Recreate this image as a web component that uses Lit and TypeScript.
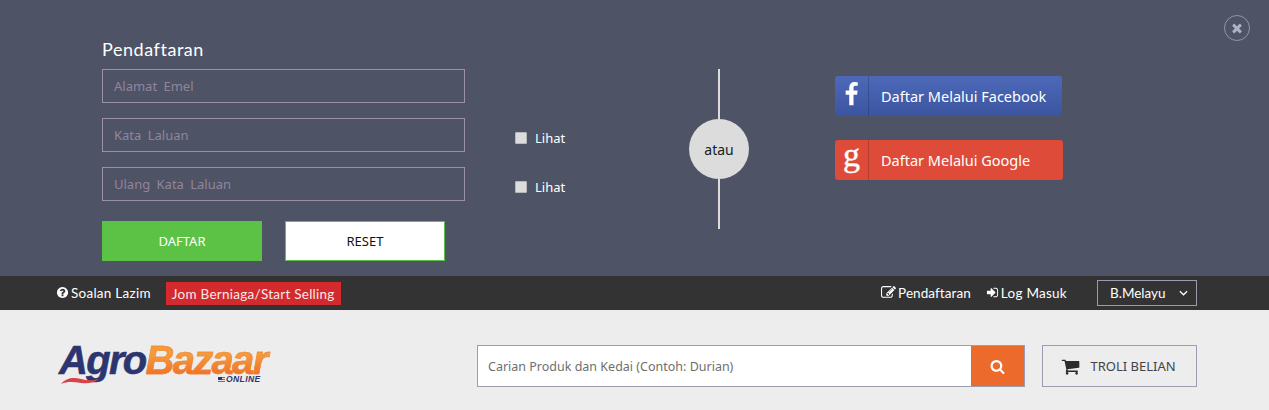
import { LitElement, html, css, svg } from "lit";
import { customElement } from "lit/decorators.js";

const fa = (d: string, cls: string) => html`<svg class=${cls} viewBox="0 0 1792 1792" aria-hidden="true">${svg`<path fill="currentColor" d=${d}></path>`}</svg>`;

const ICONS = {
  question: "M1024 1376v-192q0-14-9-23t-23-9h-192q-14 0-23 9t-9 23v192q0 14 9 23t23 9h192q14 0 23-9t9-23zm256-672q0-88-55.5-163t-138.5-116-170-41q-243 0-371 213-15 24 8 42l132 100q7 6 19 6 16 0 25-12 53-68 86-92 34-24 86-24 48 0 85.5 26t37.5 59q0 38-20 61t-68 45q-63 28-115.5 86.5t-52.5 125.5v36q0 14 9 23t23 9h192q14 0 23-9t9-23q0-19 21.5-49.5t54.5-49.5q32-18 49-28.5t46-35 44.5-48 28-60.5 12.5-81zm384 192q0 209-103 385.5t-279.5 279.5-385.5 103-385.5-103-279.5-279.5-103-385.5 103-385.5 279.5-279.5 385.5-103 385.5 103 279.5 279.5 103 385.5z",
  search: "M1216 832q0-185-131.5-316.5t-316.5-131.5-316.5 131.5-131.5 316.5 131.5 316.5 316.5 131.5 316.5-131.5 131.5-316.5zm512 832q0 52-38 90t-90 38q-54 0-90-38l-343-342q-179 124-399 124-143 0-273.5-55.5t-225-150-150-225-55.5-273.5 55.5-273.5 150-225 225-150 273.5-55.5 273.5 55.5 225 150 150 225 55.5 273.5q0 220-124 399l343 343q37 37 37 90z",
  cart: "M704 1536q0 52-38 90t-90 38-90-38-38-90 38-90 90-38 90 38 38 90zm896 0q0 52-38 90t-90 38-90-38-38-90 38-90 90-38 90 38 38 90zm128-1088v512q0 24-16.5 42.5t-40.5 21.5l-1044 122q13 60 13 70 0 16-24 64h920q26 0 45 19t19 45-19 45-45 19h-1024q-26 0-45-19t-19-45q0-11 8-31.5t16-36 21.5-40 15.5-29.5l-177-823h-204q-26 0-45-19t-19-45 19-45 45-19h256q16 0 28.5 6.5t19.5 15.5 13 24.5 8 26 5.5 29.5 4.5 26h1201q26 0 45 19t19 45z",
  signIn: "M1312 896q0 26-19 45l-544 544q-19 19-45 19t-45-19-19-45v-288h-448q-26 0-45-19t-19-45v-384q0-26 19-45t45-19h448v-288q0-26 19-45t45-19 45 19l544 544q19 19 19 45zm352-352v704q0 119-84.5 203.5t-203.5 84.5h-320q-13 0-22.5-9.5t-9.5-22.5q0-4-1-20t-.5-26.5 3-23.5 10-19.5 20.5-6.5h320q66 0 113-47t47-113v-704q0-66-47-113t-113-47h-312l-11.5-1-11.5-3-8-5.5-7-9-2-13.5q0-4-1-20t-.5-26.5 3-23.5 10-19.5 20.5-6.5h320q119 0 203.5 84.5t84.5 203.5z",
  edit: "M888 1184l116-116-152-152-116 116v56h96v96h56zm440-720q-16-16-33 1l-350 350q-17 17-1 33t33-1l350-350q17-17 1-33zm80 594v190q0 119-84.5 203.5t-203.5 84.5h-832q-119 0-203.5-84.5t-84.5-203.5v-832q0-119 84.5-203.5t203.5-84.5h832q63 0 117 25 15 7 18 23 3 17-9 29l-49 49q-14 14-32 8-23-6-45-6h-832q-66 0-113 47t-47 113v832q0 66 47 113t113 47h832q66 0 113-47t47-113v-126q0-13 9-22l64-64q15-15 35-7t20 29zm-96-738l288 288-672 672h-288v-288zm444 132l-92 92-288-288 92-92q28-28 68-28t68 28l152 152q28 28 28 68t-28 68z",
  facebook: "M1343 12v264h-157q-86 0-116 36t-30 108v189h293l-39 296h-254v759h-306v-759h-255v-296h255v-218q0-186 104-288.5t277-102.5q147 0 228 12z",
  times: "M1490 1322q0 40-28 68l-136 136q-28 28-68 28t-68-28l-294-294-294 294q-28 28-68 28t-68-28l-136-136q-28-28-28-68t28-68l294-294-294-294q-28-28-28-68t28-68l136-136q28-28 68-28t68 28l294 294 294-294q28-28 68-28t68 28l136 136q28 28 28 68t-28 68l-294 294 294 294q28 28 28 68z",
};

@customElement("app-root")
export class AppRoot extends LitElement {
  static styles = css`
    :host { display: block; width: 1269px; height: 410px; overflow: hidden; font-family: "Noto Sans", sans-serif; }
    * { box-sizing: border-box; }

    .panel { position: relative; height: 276px; background: #4f5366; display: flex; padding: 40px 0 0 102px; color: #fff; }
    .close { position: absolute; left: 1224px; top: 15px; width: 26px; height: 26px; border: 1px solid #9496a8; border-radius: 50%; display: flex; align-items: center; justify-content: center; color: #b0b2c4; padding: 0; background: none; }
    .close svg { width: 14px; height: 14px; }

    .form { width: 500px; }
    .title { font-family: Lato, sans-serif; font-size: 18px; line-height: 18px; height: 29px; letter-spacing: 0.55px; }
    .row { display: flex; height: 34px; margin-bottom: 15px; }
    .row input.text { width: 363px; height: 34px; border: 1px solid #9c90a8; background: transparent; padding: 0 11px; font: 13px "Noto Sans", sans-serif; color: #fff; word-spacing: 3px; outline: none; }
    .row input.text::placeholder { color: #8f869c; opacity: 1; }
    .check { display: flex; align-items: center; margin-left: 50px; padding-top: 6px; font-size: 13px; gap: 8px; color: #fff; }
    .check input { appearance: none; margin: 0; width: 12px; height: 12px; border: 1px solid #b8b8b8; border-radius: 1px; background: #dcdcdc; }
    .actions { display: flex; gap: 23px; margin-top: 20px; }
    .btn { width: 160px; height: 40px; font: 13px "Noto Sans", sans-serif; display: flex; align-items: center; justify-content: center; padding: 0; border: 1px solid #5cc246; }
    .btn.primary { background: #5cc246; color: #fff; }
    .btn.reset { background: #fff; color: #111; }

    .divider { width: 60px; margin: 29px 0 0 87px; height: 160px; display: flex; flex-direction: column; align-items: center; }
    .divider .line { flex: 1; width: 2px; background: #dcdcdc; }
    .divider .circle { width: 60px; height: 60px; border-radius: 50%; background: #dcdcdc; color: #1a1a22; display: flex; align-items: center; justify-content: center; font-size: 14px; }

    .social { margin: 36px 0 0 86px; display: flex; flex-direction: column; gap: 24px; align-items: flex-start; }
    .sbtn { height: 40px; display: flex; align-items: stretch; border-radius: 3px; color: #fff; font-size: 14.5px; }
    .sbtn.fb { width: 227px; background: linear-gradient(#4d69b8, #3b55a0); }
    .sbtn.gg { width: 228px; background: #de4c39; }
    .sbtn .ic { width: 34px; display: flex; align-items: center; justify-content: center; border-right: 1px solid rgba(0,0,0,.18); }
    .sbtn .ic svg { width: 25px; height: 25px; margin-top: -4px; }
    .sbtn .g { font: 400 34px/1 "Liberation Serif", serif; margin-top: -10px; -webkit-text-stroke: .4px #fff; }
    .sbtn .lb { padding-left: 12px; display: flex; align-items: center; white-space: nowrap; }

    .bar { height: 34px; background: #333; color: #fff; display: flex; align-items: center; padding: 0 72px 0 56px; font-family: Lato, sans-serif; font-size: 13.5px; letter-spacing: .26px; }
    .link { display: inline-flex; align-items: center; gap: 2px; white-space: nowrap; margin-top: -1px; }
    .link svg { width: 13px; height: 13px; }
    .link.reg { letter-spacing: .08px; }
    .link svg.edit { width: 15px; height: 15px; }
    .sell { margin-left: 15px; background: #d32a2d; height: 23px; width: 175px; display: flex; align-items: center; justify-content: center; white-space: nowrap; color: #f6e9ea; margin-top: 1px; }
    .spacer { flex: 1; }
    .bar .link + .link { margin-left: 15px; }
    .lang { margin-left: 30px; width: 100px; height: 26px; border: 1px solid #9a9ab0; display: flex; align-items: center; padding-left: 12px; gap: 13px; color: #fff; letter-spacing: 0; }
    .lang svg { width: 9px; height: 6px; }

    .main { height: 100px; background: #ededed; display: flex; align-items: flex-start; padding: 35px 72px 0 57px; }
    .logo { position: relative; width: 213px; height: 42px; display: flex; padding-left: 2px; font: italic 700 40px/30px "Liberation Sans", sans-serif; letter-spacing: -1.7px; flex: none; }
    .agro { color: #2c3570; -webkit-text-stroke: .6px #2c3570; }
    .bazaar { background: linear-gradient(#f49a3c 25%, #ee6a24 80%); -webkit-background-clip: text; background-clip: text; color: transparent; -webkit-text-stroke: .5px #f0842f; letter-spacing: -1.7px; padding-right: 4px; }
    .swoosh { position: absolute; left: 4px; top: 32px; width: 38px; height: 8px; }
    .online { position: absolute; left: 161px; top: 29px; display: flex; align-items: center; gap: 1px; font: italic 700 8.5px/10px "Liberation Sans", sans-serif; letter-spacing: .4px; color: #2c3570; }
    .flag { width: 7px; height: 5px; background: repeating-linear-gradient(#d8434a 0 1px, #f3e3e3 1px 2px); position: relative; }
    .flag::before { content: ""; position: absolute; left: 0; top: 0; width: 4px; height: 3px; background: #2c3570; }

    .search { margin-left: 207px; width: 548px; height: 42px; display: flex; border: 1px solid #9c9cb2; background: #fff; flex: none; }
    .search input { flex: 1; min-width: 0; border: 0; outline: none; background: transparent; padding: 0 10px; font: 12.5px "Noto Sans", sans-serif; color: #333; }
    .search input::placeholder { color: #6f6f6f; opacity: 1; }
    .search button { width: 53px; border: 0; padding: 0; background: #ed6a2d; color: #fff; display: flex; align-items: center; justify-content: center; }
    .search button svg { width: 15px; height: 15px; }
    .cart { margin-left: 17px; width: 155px; height: 42px; border: 1px solid #9c9cb2; display: flex; align-items: center; justify-content: center; gap: 10px; font-size: 13px; color: #444; padding: 0 2px 0 0; background: transparent; font-family: "Noto Sans", sans-serif; }
    .cart svg { width: 19px; height: 19px; color: #2b2b2b; }
  `;

  render() {
    return html`
      <section class="panel">
        <button class="close" aria-label="Tutup">${fa(ICONS.times, "")}</button>
        <form class="form">
          <div class="title">Pendaftaran</div>
          <div class="row"><input class="text" placeholder="Alamat Emel" /></div>
          <div class="row">
            <input class="text" type="password" placeholder="Kata Laluan" />
            <label class="check"><input type="checkbox" />Lihat</label>
          </div>
          <div class="row">
            <input class="text" type="password" placeholder="Ulang Kata Laluan" />
            <label class="check"><input type="checkbox" />Lihat</label>
          </div>
          <div class="actions">
            <button type="button" class="btn primary">DAFTAR</button>
            <button type="button" class="btn reset">RESET</button>
          </div>
        </form>
        <div class="divider">
          <div class="line"></div>
          <div class="circle">atau</div>
          <div class="line"></div>
        </div>
        <div class="social">
          <div class="sbtn fb"><span class="ic">${fa(ICONS.facebook, "")}</span><span class="lb">Daftar Melalui Facebook</span></div>
          <div class="sbtn gg"><span class="ic"><span class="g">g</span></span><span class="lb">Daftar Melalui Google</span></div>
        </div>
      </section>
      <nav class="bar">
        <span class="link">${fa(ICONS.question, "")}Soalan Lazim</span>
        <span class="sell">Jom Berniaga/Start Selling</span>
        <span class="spacer"></span>
        <span class="link reg">${fa(ICONS.edit, "edit")}Pendaftaran</span>
        <span class="link">${fa(ICONS.signIn, "")}Log Masuk</span>
        <span class="lang">B.Melayu
          <svg viewBox="0 0 10 6"><path d="M1 1l4 4 4-4" fill="none" stroke="currentColor" stroke-width="1.4"></path></svg>
        </span>
      </nav>
      <header class="main">
        <div class="logo">
          <span class="agro">Agro</span><span class="bazaar">Bazaar</span>
          <svg class="swoosh" viewBox="0 0 38 8"><path d="M0 7C5 1 12 0 20 2c6 1.500 12 2 18 0-5 4-11 5-18 4C13 5 7 4 0 7z" fill="#d8434a"></path></svg>
          <span class="online"><i class="flag"></i>ONLINE</span>
        </div>
        <div class="search">
          <input placeholder="Carian Produk dan Kedai (Contoh: Durian)" />
          <button aria-label="Cari">${fa(ICONS.search, "")}</button>
        </div>
        <button class="cart">${fa(ICONS.cart, "")}TROLI BELIAN</button>
      </header>
    `;
  }
}
